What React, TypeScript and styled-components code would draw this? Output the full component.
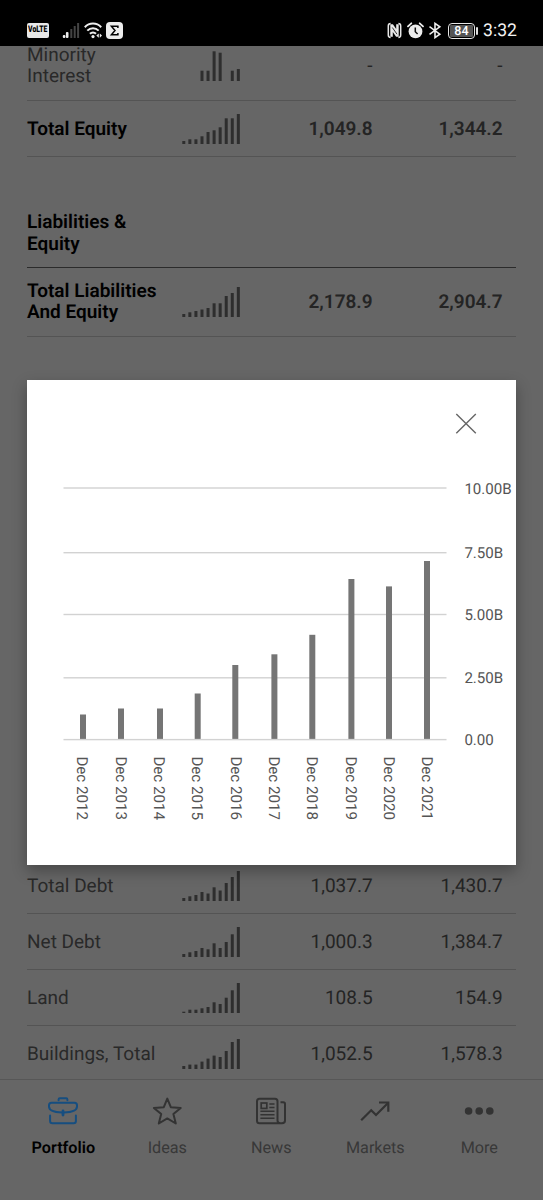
import React from "react";
import styled, { createGlobalStyle } from "styled-components";

const GlobalStyle = createGlobalStyle`
  * { box-sizing: border-box; }
  body {
    margin: 0;
    background: #666;
    font-family: Roboto, "Liberation Sans", sans-serif;
    text-rendering: geometricPrecision;
  }
`;

const Screen = styled.div`
  position: relative;
  width: 543px;
  height: 1200px;
  display: flex;
  flex-direction: column;
  overflow: hidden;
  background: #666;
`;

const StatusBar = styled.header`
  height: 46px;
  flex: none;
  display: flex;
  justify-content: space-between;
  padding: 14px 26px 0 27px;
  background: #000;
  svg { display: block; }
`;

const StatusGroup = styled.div`
  display: flex;
  align-items: center;
  height: 33px;
`;

const VolteBadge = styled.span`
  width: 22px;
  height: 15px;
  border-radius: 2px;
  background: #e8e8e8;
  display: flex;
  align-items: center;
  justify-content: center;
  overflow: hidden;
  margin-right: 13px;
  span {
    flex: none;
    font-size: 9px;
    font-weight: 900;
    line-height: 15px;
    color: #000;
    transform: scaleX(0.76);
  }
`;

const Sigma = styled.span`
  width: 17px;
  height: 17px;
  margin-left: 4px;
  border-radius: 4px;
  background: #ededed;
  display: flex;
  align-items: center;
  justify-content: center;
`;

const Battery = styled.span`
  width: 27px;
  height: 16px;
  margin-left: 6px;
  border: 1.5px solid #e6e6e6;
  border-radius: 4px;
  padding: 1px;
  display: flex;
  span {
    flex: 1;
    border-radius: 1px;
    background: #555;
    color: #fff;
    font-size: 12.5px;
    font-weight: 500;
    line-height: 13px;
    text-align: center;
    letter-spacing: 0.2px;
  }
`;

const BatteryTip = styled.span`
  width: 2px;
  height: 8px;
  margin: 0 5px 0 1px;
  border-radius: 1px;
  background: #ddd;
`;

const Clock = styled.span`
  width: 34px;
  font-size: 17.6px;
  line-height: 20px;
  color: #f2f2f2;
  white-space: nowrap;
`;

const Statement = styled.main`
  flex: 1;
  min-height: 0;
  overflow: hidden;
  padding: 0 27px;
`;

const Rows = styled.div`
  margin-top: -14px;
`;

const Row = styled.div<{ $tall?: boolean; $bold?: boolean }>`
  display: grid;
  grid-template-columns: 155px 58px 1fr 130px;
  align-items: center;
  height: ${(p) => (p.$tall ? 69 : 56)}px;
  padding-right: 13.4px;
  border-bottom: 1px solid #545454;
  font-size: 19px;
  line-height: 21.6px;
  font-weight: ${(p) => (p.$bold ? 600 : 400)};
  svg { display: block; }
`;

const Label = styled.div<{ $bold?: boolean; $tall?: boolean }>`
  color: ${(p) => (p.$bold ? "#000" : "#292929")};
  white-space: pre;
  padding-bottom: ${(p) => (p.$tall ? 1.4 : 0)}px;
`;

const Value = styled.div`
  color: #242424;
  text-align: right;
`;

const Section = styled.h2`
  margin: 0;
  height: 111px;
  display: flex;
  align-items: flex-end;
  padding-bottom: 13px;
  border-bottom: 1px solid #2b2b2b;
  font-size: 19px;
  line-height: 21.5px;
  font-weight: 600;
  color: #000;
  white-space: pre;
`;

const Gap = styled.div`
  height: 521px;
`;

const NavBar = styled.nav`
  flex: none;
  height: 121px;
  display: grid;
  grid-template-columns: repeat(5, 104px);
  padding: 0 11px;
  border-top: 1px solid #575757;
  background: #666;
`;

const Tab = styled.a<{ $active?: boolean }>`
  display: flex;
  flex-direction: column;
  align-items: center;
  padding-top: 15px;
  padding-left: 0.6px;
  font-size: 16.2px;
  line-height: 20px;
  font-weight: ${(p) => (p.$active ? 600 : 400)};
  color: ${(p) => (p.$active ? "#000" : "#383838")};
  svg { display: block; margin-bottom: 10.5px; color: ${(p) => (p.$active ? "#164e80" : "#333")}; }
`;

const Dialog = styled.section`
  position: absolute;
  left: 27px;
  top: 380px;
  width: 489px;
  height: 485px;
  display: flex;
  flex-direction: column;
  background: #fff;
  box-shadow: 0 6px 14px rgba(0, 0, 0, 0.3);
  svg { display: block; }
`;

const DialogHeader = styled.div`
  height: 90px;
  display: flex;
  justify-content: flex-end;
  padding: 32px 38px 0 0;
`;

const CloseButton = styled.button`
  width: 24px;
  height: 24px;
  padding: 0;
  border: 0;
  background: none;
  color: #666;
`;

const AxisText = styled.text`
  font-size: 15.1px;
  fill: #555;
`;

function Spark({ bars }: { bars: number[] }) {
  return (
    <svg width="58" height="32" viewBox="0 0 58 32" fill="#2e2e2e">
      {bars.map((h, i) => (
        <rect key={i} x={0.3 + i * 6.06} y={31 - h} width="3" height={h} />
      ))}
    </svg>
  );
}

interface Item {
  label: string;
  bars: number[];
  values: [string, string];
  tall?: boolean;
  bold?: boolean;
}

const equity: Item[] = [
  { label: "Minority\nInterest", bars: [0, 0, 0, 10.3, 10.3, 29.7, 28.3, 0, 10.3, 12], values: ["-", "-"], tall: true },
  { label: "Total Equity", bars: [3, 4.7, 4.7, 7.7, 12, 13.7, 16.7, 25.7, 25.7, 30], values: ["1,049.8", "1,344.2"], bold: true },
];

const liabilities: Item[] = [
  { label: "Total Liabilities\nAnd Equity", bars: [3, 4.7, 6, 7.5, 9, 13.7, 13.7, 21, 24, 30], values: ["2,178.9", "2,904.7"], tall: true, bold: true },
];

const supplemental: Item[] = [
  { label: "Total Debt", bars: [3, 4.7, 6, 9, 7.5, 13.7, 10.5, 18, 24, 30], values: ["1,037.7", "1,430.7"] },
  { label: "Net Debt", bars: [3, 4.7, 6, 9, 7.7, 13.7, 9, 15, 22.7, 30], values: ["1,000.3", "1,384.7"] },
  { label: "Land", bars: [1.3, 3.3, 3.3, 4.7, 6, 10.7, 9, 15.3, 22.7, 30], values: ["108.5", "154.9"] },
  { label: "Buildings, Total", bars: [3, 4.4, 4.4, 7.4, 10.4, 13.4, 12, 18, 27, 30], values: ["1,052.5", "1,578.3"] },
];

function Line({ item }: { item: Item }) {
  return (
    <Row $tall={item.tall} $bold={item.bold}>
      <Label $bold={item.bold} $tall={item.tall}>{item.label}</Label>
      <Spark bars={item.bars} />
      <Value>{item.values[0]}</Value>
      <Value>{item.values[1]}</Value>
    </Row>
  );
}

const ticks = [
  { label: "10.00B", y: 18 },
  { label: "7.50B", y: 82.7 },
  { label: "5.00B", y: 144.5 },
  { label: "2.50B", y: 207.8 },
  { label: "0.00", y: 269.6 },
];

const columns = [
  { label: "Dec 2012", x: 53, y: 244.5 },
  { label: "Dec 2013", x: 91, y: 238.5 },
  { label: "Dec 2014", x: 130, y: 238.5 },
  { label: "Dec 2015", x: 167.7, y: 223.5 },
  { label: "Dec 2016", x: 205.3, y: 195 },
  { label: "Dec 2017", x: 244.4, y: 184.3 },
  { label: "Dec 2018", x: 282.3, y: 164.8 },
  { label: "Dec 2019", x: 321.4, y: 109 },
  { label: "Dec 2020", x: 359, y: 116.4 },
  { label: "Dec 2021", x: 397, y: 91 },
];

function Chart() {
  return (
    <svg width="489" height="395" viewBox="0 0 489 395">
      {ticks.map((t, i) => (
        <g key={t.label}>
          <rect x="36.5" y={t.y - 0.7} width="383" height="1.4" fill="#d2d2d2" />
          <AxisText x="437.4" y={t.y + (i === 0 ? 6.4 : 5.3)}>{t.label}</AxisText>
        </g>
      ))}
      {columns.map((c, i) => (
        <g key={c.label}>
          <rect x={c.x} y={c.y} width="6" height={268.9 - c.y} fill="#757575" />
          <AxisText transform={`translate(${50.4 + i * 38.3} 286.4) rotate(90)`}>{c.label}</AxisText>
        </g>
      ))}
    </svg>
  );
}

const WifiIcon = styled.svg`
  margin-left: 4px;
`;

const AlarmIcon = styled.svg`
  margin-left: 5px;
`;

const BluetoothIcon = styled.svg`
  margin-left: 4px;
`;

function StatusIcons() {
  return (
    <StatusBar>
      <StatusGroup>
        <VolteBadge><span>VoLTE</span></VolteBadge>
        <svg width="18" height="17" viewBox="0 0 18 17">
          <rect x="0.8" y="13" width="2.6" height="3" rx="1" fill="#eee" />
          <rect x="3.9" y="10" width="2.6" height="6" rx="1" fill="#eee" />
          <rect x="8.3" y="7" width="2" height="9" fill="#444" />
          <rect x="11.7" y="4" width="2" height="12" fill="#444" />
          <rect x="15.1" y="1" width="2" height="15" fill="#444" />
        </svg>
        <WifiIcon width="18" height="17" viewBox="0 0 18 17" fill="none" stroke="#eee" strokeWidth="2">
          <path d="M0.8 5.2 C5.3 0.4 12.7 0.4 17.2 5.2" />
          <path d="M3.3 8.6 C6.5 5.3 11.5 5.3 14.7 8.6" />
          <path d="M5.9 11.8 C7.7 10 10.3 10 12 11.8" />
          <circle cx="9" cy="14.6" r="1.6" fill="#eee" stroke="none" />
          <path d="M14.8 11.4 L12.3 13.6 L14.8 15.8Z M15.8 11.4 L18 13.6 L15.8 15.8Z" fill="#eee" stroke="none" />
        </WifiIcon>
        <Sigma>
          <svg width="11" height="13" viewBox="0 0 11 13" fill="none" stroke="#000" strokeWidth="1.5">
            <path d="M8.9 4V2.2H2.4L6 6.5L2.4 10.8H8.9V9" />
          </svg>
        </Sigma>
      </StatusGroup>
      <StatusGroup>
        <svg width="15" height="17" viewBox="0 0 15 17">
          <path d="M3.6 1.6Q1.3 1.6 1.3 4V13Q1.3 15.4 3.6 15.4M11.4 1.6Q13.7 1.6 13.7 4V13Q13.7 15.4 11.4 15.4" fill="none" stroke="#e8e8e8" strokeWidth="1.5" />
          <path d="M3.3 2.3H5.9L9.2 7.1V2.3H11.7V14.7H9.1L5.8 9.9V14.7H3.3Z" fill="#e8e8e8" />
          <path d="M5.3 5.5L10 12.2" stroke="#222" strokeWidth="0.9" />
        </svg>
        <AlarmIcon width="17" height="17" viewBox="0 0 17 17">
          <circle cx="8.5" cy="9.4" r="6.9" fill="#ededed" />
          <path d="M1 4.4 L4.3 1.3 M16 4.4 L12.7 1.3" stroke="#ededed" strokeWidth="1.8" strokeLinecap="round" />
          <path d="M8.3 5.5V9.8L10.6 12" fill="none" stroke="#111" strokeWidth="1.5" />
        </AlarmIcon>
        <BluetoothIcon width="14" height="17" viewBox="0 0 14 17" fill="none" stroke="#eee" strokeWidth="1.6">
          <path d="M1.5 4.7L11.8 12.2L7 15.6V1.4L11.8 4.8L1.5 12.3" />
        </BluetoothIcon>
        <Battery><span>84</span></Battery>
        <BatteryTip />
        <Clock>3:32</Clock>
      </StatusGroup>
    </StatusBar>
  );
}

function BriefcaseIcon() {
  return (
    <svg width="32" height="32" viewBox="0 0 32 32" fill="none" stroke="currentColor" strokeWidth="2" strokeLinecap="round">
      <path d="M11.6 5.2V4.5Q11.6 3.3 12.8 3.3H19.2Q20.4 3.3 20.4 4.5V5.2" />
      <path d="M15 17.5C8 17.3 2 15.5 2 11.5V10.3Q2 7.8 4.5 7.8H27.5Q30 7.8 30 10.3V11.5C30 15.5 24 17.3 17 17.5" />
      <path d="M16 16V20" strokeWidth="2.8" />
      <path d="M3.1 20.6V26Q3.1 28.3 5.4 28.3H26.6Q28.9 28.3 28.9 26V20.6" />
    </svg>
  );
}

function StarIcon() {
  return (
    <svg width="32" height="32" viewBox="0 0 32 32" fill="none" stroke="currentColor" strokeWidth="2">
      <path d="M16.3 3.6L19.8 12.2L29.7 12.9L22.4 19.1L24.8 28.5L16.3 23.4L7.8 28.5L10.2 19.1L2.9 12.9L12.8 12.2Z" strokeLinejoin="round" />
    </svg>
  );
}

function NewsIcon() {
  return (
    <svg width="32" height="32" viewBox="0 0 32 32" fill="none" stroke="currentColor" strokeWidth="2">
      <path d="M27 28.2H4.5Q2 28.2 2 25.7V6.3Q2 3.8 4.5 3.8H20Q22.5 3.8 22.5 6.3V25.5Q22.5 28.2 25.5 28.2H27Q30 28.2 30 25.4V9Q30 7.2 28.2 7.2H25.5" />
      <rect x="6.2" y="8" width="5.6" height="5.4" strokeWidth="1.7" />
      <path d="M14.3 9H19.5M14.3 12.6H19.5M5.4 16.3H19.5M5.4 19.8H19.5M5.4 23.3H19.5" strokeWidth="1.5" />
    </svg>
  );
}

function MarketsIcon() {
  return (
    <svg width="32" height="32" viewBox="0 0 32 32" fill="none" stroke="currentColor" strokeWidth="2.2">
      <path d="M2.2 25.2L12.2 15.2L17 20L29 8" />
      <path d="M20 7.5H29.3V16.8" />
    </svg>
  );
}

function MoreIcon() {
  return (
    <svg width="32" height="32" viewBox="0 0 32 32" fill="currentColor">
      <circle cx="5.6" cy="16" r="3.8" />
      <circle cx="16.2" cy="16" r="3.8" />
      <circle cx="26.8" cy="16" r="3.8" />
    </svg>
  );
}

export default function App() {
  return (
    <Screen>
      <GlobalStyle />
      <StatusIcons />
      <Statement>
        <Rows>
          {equity.map((r) => <Line key={r.label} item={r} />)}
          <Section>{"Liabilities &\nEquity"}</Section>
          {liabilities.map((r) => <Line key={r.label} item={r} />)}
          <Gap />
          {supplemental.map((r) => <Line key={r.label} item={r} />)}
        </Rows>
      </Statement>
      <NavBar>
        <Tab $active><BriefcaseIcon />Portfolio</Tab>
        <Tab><StarIcon />Ideas</Tab>
        <Tab><NewsIcon />News</Tab>
        <Tab><MarketsIcon />Markets</Tab>
        <Tab><MoreIcon />More</Tab>
      </NavBar>
      <Dialog>
        <DialogHeader>
          <CloseButton aria-label="Close">
            <svg width="24" height="24" viewBox="0 0 24 24" stroke="currentColor" strokeWidth="1.4">
              <path d="M2.3 2L21.8 21.3M21.8 2L2.3 21.3" />
            </svg>
          </CloseButton>
        </DialogHeader>
        <Chart />
      </Dialog>
    </Screen>
  );
}
